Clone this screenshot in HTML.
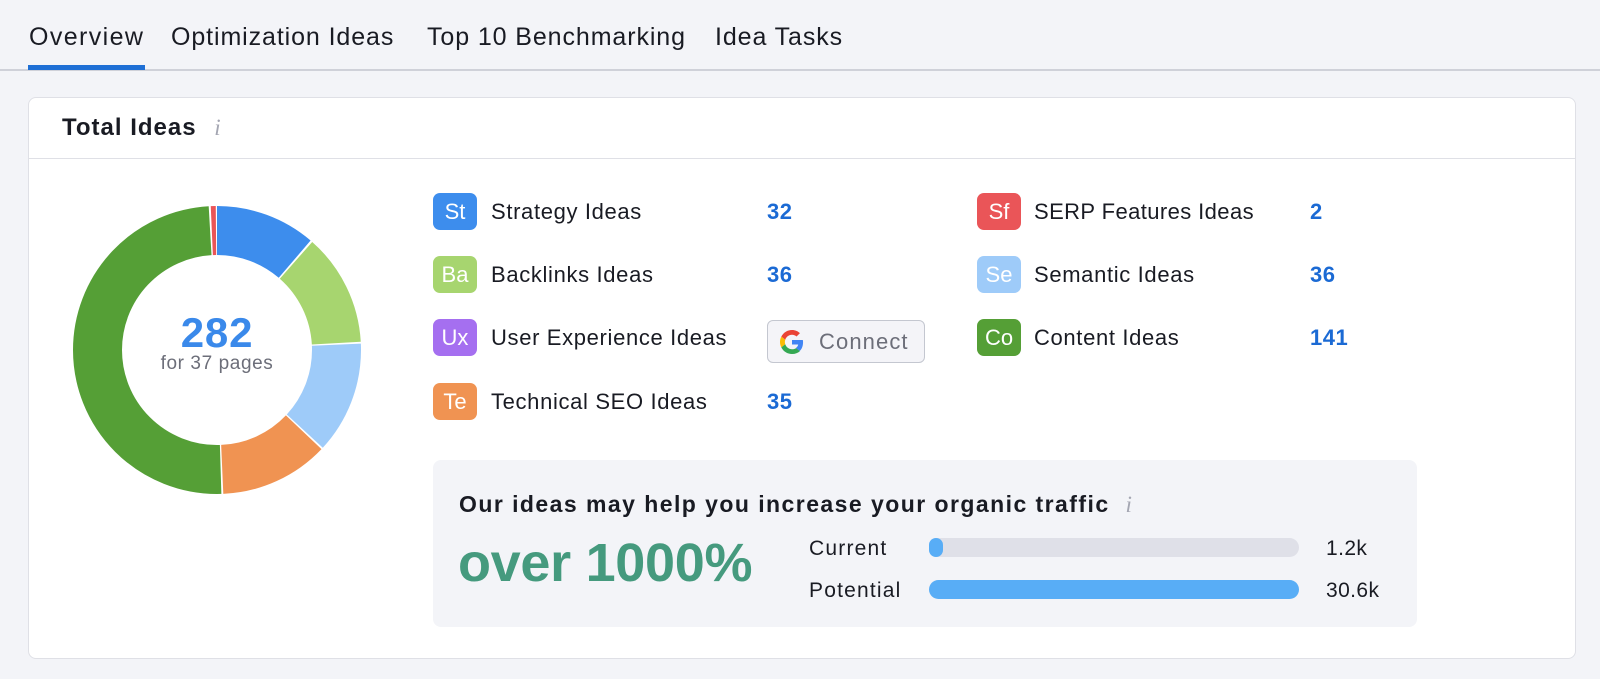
<!DOCTYPE html>
<html><head><meta charset="utf-8"><style>
*{margin:0;padding:0;box-sizing:border-box}
body{width:1600px;height:679px;background:#f3f4f8;font-family:"Liberation Sans",Arial,sans-serif;color:#191b23;position:relative;overflow:hidden}
.abs{position:absolute;white-space:nowrap}
.tab{position:absolute;top:23px;font-size:25px;line-height:28px;color:#191b23;letter-spacing:0.9px}
.card{position:absolute;left:28px;top:97px;width:1548px;height:562px;background:#fff;border:1px solid #dfe0e6;border-radius:8px}
.ic{position:absolute;width:44px;height:37px;border-radius:7px;color:#fff;font-size:22px;line-height:37px;text-align:center}
.lbl{position:absolute;font-size:22px;line-height:26px;color:#191b23;white-space:nowrap;letter-spacing:0.65px}
.num{position:absolute;font-size:22px;line-height:26px;font-weight:bold;color:#1b6ad4;letter-spacing:0.5px}
</style></head><body>
<div class="tab" style="left:29px;letter-spacing:1.4px">Overview</div>
<div class="tab" style="left:171px">Optimization Ideas</div>
<div class="tab" style="left:427px">Top 10 Benchmarking</div>
<div class="tab" style="left:715px">Idea Tasks</div>
<div class="abs" style="left:0;top:69px;width:1600px;height:2px;background:#cfd1d9"></div>
<div class="abs" style="left:28px;top:65px;width:117px;height:5px;background:#1e6fd5"></div>

<div class="card"></div>
<div class="abs" style="left:29px;top:158px;width:1546px;height:1px;background:#dfe0e6"></div>
<div class="abs" style="left:62px;top:114px;font-size:24px;font-weight:bold;line-height:28px;letter-spacing:1px">Total Ideas <span style="font-family:'Liberation Serif',serif;font-style:italic;font-weight:normal;color:#a4a6b2;font-size:23px;margin-left:10px">i</span></div>

<svg class="abs" style="left:0;top:0" width="440" height="679">
<g transform="translate(217,350) rotate(-90)">
<circle r="119.5" fill="none" stroke-width="49" stroke="#3d8ded" stroke-dasharray="84.5 1000" stroke-dashoffset="0"/>
<circle r="119.5" fill="none" stroke-width="49" stroke="#a7d56f" stroke-dasharray="94.4 1000" stroke-dashoffset="-86.3"/>
<circle r="119.5" fill="none" stroke-width="49" stroke="#9ecbf9" stroke-dasharray="94.4 1000" stroke-dashoffset="-182.3"/>
<circle r="119.5" fill="none" stroke-width="49" stroke="#f09352" stroke-dasharray="91.7 1000" stroke-dashoffset="-278.3"/>
<circle r="119.5" fill="none" stroke-width="49" stroke="#559f36" stroke-dasharray="372 1000" stroke-dashoffset="-371.6"/>
<circle r="119.5" fill="none" stroke-width="49" stroke="#ea5558" stroke-dasharray="4.2 1000" stroke-dashoffset="-745.3"/>
</g>
</svg>
<div class="abs" style="left:117px;top:312px;width:200px;text-align:center;font-size:42px;font-weight:bold;color:#3a89ea;line-height:42px;letter-spacing:0.8px">282</div>
<div class="abs" style="left:117px;top:354px;width:200px;text-align:center;font-size:19px;color:#6c6e79;line-height:20px;letter-spacing:0.6px">for 37 pages</div>

<div class="ic" style="left:433px;top:193px;background:#3d8ded">St</div>
<div class="lbl" style="left:491px;top:199px">Strategy Ideas</div>
<div class="num" style="left:767px;top:199px">32</div>
<div class="ic" style="left:433px;top:256px;background:#a7d56f">Ba</div>
<div class="lbl" style="left:491px;top:262px">Backlinks Ideas</div>
<div class="num" style="left:767px;top:262px">36</div>
<div class="ic" style="left:433px;top:319px;background:#a56ff0">Ux</div>
<div class="lbl" style="left:491px;top:325px">User Experience Ideas</div>
<div class="abs" style="left:767px;top:320px;width:158px;height:43px;border:1px solid #c4c7d0;border-radius:6px;background:#f4f4f8"></div>
<svg class="abs" style="left:780px;top:330px" width="24" height="24" viewBox="0 0 48 48"><path fill="#EA4335" d="M24 9.5c3.5 0 6.6 1.2 9.1 3.6l6.8-6.8C35.8 2.4 30.3 0 24 0 14.6 0 6.6 5.4 2.6 13.3l7.9 6.1C12.4 13.7 17.7 9.5 24 9.5z"/><path fill="#4285F4" d="M46.1 24.5c0-1.6-.1-3.1-.4-4.5H24v9h12.4c-.5 2.9-2.2 5.3-4.6 6.9l7.7 6c4.5-4.2 6.6-10.3 6.6-17.4z"/><path fill="#FBBC05" d="M10.5 28.6c-.5-1.4-.8-3-.8-4.6s.3-3.2.8-4.6l-7.9-6.1C.9 16.6 0 20.2 0 24s.9 7.4 2.6 10.7l7.9-6.1z"/><path fill="#34A853" d="M24 48c6.5 0 11.9-2.1 15.9-5.8l-7.7-6c-2.2 1.5-5 2.3-8.2 2.3-6.3 0-11.6-4.2-13.5-9.9l-7.9 6.1C6.6 42.6 14.6 48 24 48z"/></svg>
<div class="lbl" style="left:819px;top:329px;color:#6c6e79;letter-spacing:1.1px">Connect</div>
<div class="ic" style="left:433px;top:383px;background:#f09352">Te</div>
<div class="lbl" style="left:491px;top:389px">Technical SEO Ideas</div>
<div class="num" style="left:767px;top:389px">35</div>

<div class="ic" style="left:977px;top:193px;background:#ea5558">Sf</div>
<div class="lbl" style="left:1034px;top:199px;letter-spacing:0.4px">SERP Features Ideas</div>
<div class="num" style="left:1310px;top:199px">2</div>
<div class="ic" style="left:977px;top:256px;background:#9ecbf9">Se</div>
<div class="lbl" style="left:1034px;top:262px">Semantic Ideas</div>
<div class="num" style="left:1310px;top:262px">36</div>
<div class="ic" style="left:977px;top:319px;background:#559f36">Co</div>
<div class="lbl" style="left:1034px;top:325px">Content Ideas</div>
<div class="num" style="left:1310px;top:325px">141</div>

<div class="abs" style="left:433px;top:460px;width:984px;height:167px;background:#f3f4f8;border-radius:8px"></div>
<div class="abs" style="left:459px;top:491px;font-size:23px;font-weight:bold;line-height:26px;letter-spacing:1.45px">Our ideas may help you increase your organic traffic <span style="font-family:'Liberation Serif',serif;font-style:italic;font-weight:normal;color:#a4a6b2;margin-left:8px">i</span></div>
<div class="abs" style="left:458px;top:532px;font-size:54px;font-weight:bold;color:#459a7e;line-height:62px;letter-spacing:-0.3px">over 1000%</div>
<div class="lbl" style="left:809px;top:536px;font-size:21px;letter-spacing:1.2px">Current</div>
<div class="lbl" style="left:809px;top:578px;font-size:21px;letter-spacing:1.2px">Potential</div>
<div class="abs" style="left:929px;top:538px;width:370px;height:19px;border-radius:10px;background:#dfe0e8"></div>
<div class="abs" style="left:929px;top:538px;width:14px;height:19px;border-radius:10px;background:#58adf6"></div>
<div class="abs" style="left:929px;top:580px;width:370px;height:19px;border-radius:10px;background:#58adf6"></div>
<div class="lbl" style="left:1326px;top:536px;font-size:21px;letter-spacing:0.4px">1.2k</div>
<div class="lbl" style="left:1326px;top:578px;font-size:21px;letter-spacing:0.4px">30.6k</div>
</body></html>
